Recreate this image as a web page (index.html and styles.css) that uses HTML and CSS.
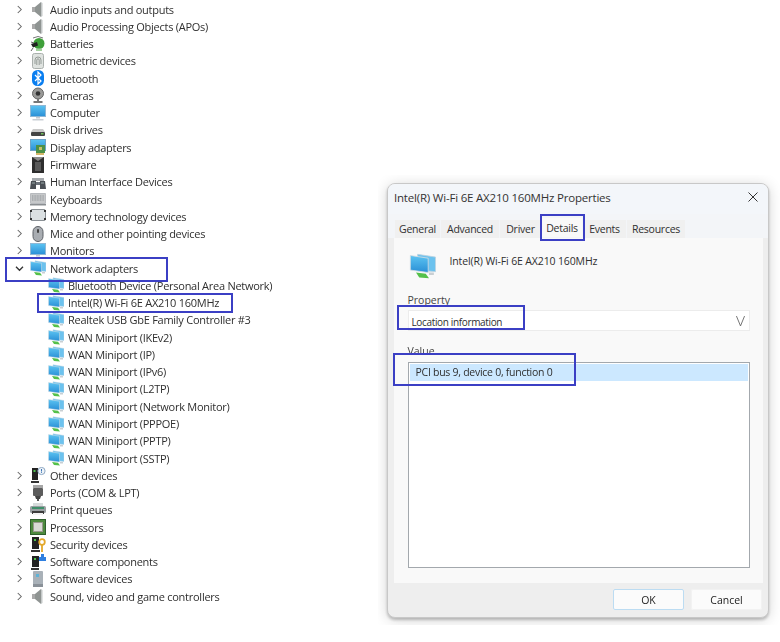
FILE: index.html
```html
<!DOCTYPE html>
<html lang="en">
<head>
<meta charset="utf-8">
<title>Device Manager and adapter properties</title>
<link rel="stylesheet" href="styles.css">
</head>
<body>
<svg class="defs" width="0" height="0" aria-hidden="true">
  <defs>
    <linearGradient id="screen" x1="0" y1="0" x2="0" y2="1"><stop offset="0" stop-color="#5cc4f2"/><stop offset="1" stop-color="#2a8fd6"/></linearGradient>
    <symbol id="chev-r" viewBox="0 0 8 10"><path d="M2 1l4 4-4 4" fill="none" stroke="#666" stroke-width="1.2"/></symbol>
    <symbol id="chev-d" viewBox="0 0 10 8"><path d="M1 2l4 4 4-4" fill="none" stroke="#333" stroke-width="1.5"/></symbol>
    <symbol id="speaker" viewBox="0 0 16 16"><path d="M2 6h3v5H2z" fill="#a9a9a9"/><path d="M5 6l6-5v15l-6-5z" fill="#8f9492"/><path d="M11 1v15l1.5-1V2z" fill="#c4c8c8"/></symbol>
    <symbol id="battery" viewBox="0 0 16 16"><path d="M3 2q5-3 10 0" fill="none" stroke="#777"/><circle cx="9" cy="7.500" r="5.500" fill="#3fa03a"/><path d="M1 8l6-2 1 3.500-5 2z" fill="#222"/><path d="M3 12l-2 3M1 6l3 1" stroke="#666" fill="none"/><path d="M6 12.500h6v2.500H6z" fill="#a5d0a0"/></symbol>
    <symbol id="finger" viewBox="0 0 16 16"><rect x="2.500" y="0.500" width="11" height="15" rx="2" fill="#dfe3e0" stroke="#aab0ad"/><path d="M5 11V7a3 3 0 0 1 6 0v4M6.800 12V7a1.200 1.200 0 0 1 2.400 0v5" fill="none" stroke="#8d9490" stroke-width=".9"/></symbol>
    <symbol id="bt" viewBox="0 0 16 16"><rect x="2" y="0" width="12" height="16" rx="5.500" fill="#0a7ef0"/><path d="M5 5l6 6-3 3V2l3 3-6 6" fill="none" stroke="#fff" stroke-width="1.200"/></symbol>
    <symbol id="cam" viewBox="0 0 16 16"><circle cx="8" cy="6.500" r="5.500" fill="#9a9a98" stroke="#666"/><circle cx="8" cy="6.500" r="2.300" fill="#333"/><path d="M8 12v2" stroke="#777" stroke-width="2"/><path d="M3.500 15h9" stroke="#555" stroke-width="1.600"/></symbol>
    <symbol id="monitor" viewBox="0 0 16 16"><rect x="0.500" y="0.500" width="15" height="11" fill="url(#screen)" stroke="#8fb8d6"/><path d="M6 12h4v1.500H6z" fill="#c5cad0"/><path d="M2.500 14h11v1.500h-11z" fill="#c9ced4"/></symbol>
    <symbol id="disk" viewBox="0 0 16 16"><path d="M3 7h10l2 3H1z" fill="#c9c9c9"/><rect x="1" y="10" width="14" height="4" rx="1" fill="#444"/><rect x="11" y="11" width="2.500" height="1.500" fill="#6fbf5a"/></symbol>
    <symbol id="display" viewBox="0 0 16 16"><rect x="0.500" y="0.500" width="15" height="11" fill="url(#screen)" stroke="#6fa3c6"/><rect x="6" y="6" width="9" height="8" fill="#4c9148"/><rect x="9" y="8" width="3" height="3" fill="#c8c06a"/><path d="M6 15h8" stroke="#c9a03a" stroke-width="1.500"/></symbol>
    <symbol id="firmware" viewBox="0 0 16 16"><path d="M2 0h12v16H2z" fill="#2e2e2e"/><path d="M2 0l6 4 6-4" fill="#8a8a8a"/><path d="M5 5h6v9H5z" fill="#5a5a5a"/></symbol>
    <symbol id="hid" viewBox="0 0 16 16"><path d="M2 4h12v3H2z" fill="#a8acb0"/><path d="M0 15l1-8h5v8zM10 15V7h5l1 8z" fill="#4a4f55"/><path d="M6 8h4v3H6z" fill="#6d747c"/><path d="M2 9h3M11 9h3" stroke="#9aa"/></symbol>
    <symbol id="keyboard" viewBox="0 0 16 16"><rect x="0" y="2.500" width="16" height="10" rx="1" fill="#c6c8ca" stroke="#9ba0a4" stroke-width=".6"/><path d="M2 5h12M2 7h12M2 9h12" stroke="#8f9498" stroke-dasharray="1 .6"/><path d="M0 13h16v1.500H0z" fill="#8a8e92"/></symbol>
    <symbol id="memory" viewBox="0 0 16 16"><rect x="0.500" y="1.500" width="15" height="11" rx="1.500" fill="#dbe0e2" stroke="#8a9095"/><path d="M0 2h2v2H0zM14 2h2v2h-2zM0 10h2v2H0zM14 10h2v2h-2z" fill="#333"/></symbol>
    <symbol id="mouse" viewBox="0 0 16 16"><rect x="3" y="0.500" width="10" height="15" rx="5" fill="#a9adb2" stroke="#5d6167"/><rect x="7" y="3" width="2" height="4" rx="1" fill="#444"/></symbol>
    <symbol id="net" viewBox="0 0 16 16"><path d="M5 .8l11 1.700v9L5 10.500z" fill="#6cc2ee" stroke="#bcd3e0" stroke-width=".5"/><path d="M.5 1.500l11 1.700v8.800L.5 10.500z" fill="url(#screen)" stroke="#d5dde2" stroke-width=".5"/><path d="M4 12l6 .8 2 2.700-6-.5z" fill="#55c04a"/><path d="M12 12h3v1.500h-3z" fill="#c9cfd3"/></symbol>
    <symbol id="other" viewBox="0 0 16 16"><path d="M2 1h6v12H2z" fill="#222"/><rect x="3.500" y="3" width="2" height="2" fill="#4cc04a"/><path d="M1 14h8v2H1z" fill="#333"/><circle cx="11.500" cy="4" r="3.600" fill="#eef3f8" stroke="#8fa9c4"/><path d="M11.500 2v2.500M11.500 5.200v.8" stroke="#3b74b5"/></symbol>
    <symbol id="ports" viewBox="0 0 16 16"><rect x="3" y="0" width="10" height="3" fill="#a7a7a7"/><rect x="3" y="3" width="10" height="8" rx="1" fill="#5c5c5c"/><path d="M5 11h6l-1 3H6z" fill="#444"/><path d="M8 14v2" stroke="#555" stroke-width="2"/></symbol>
    <symbol id="print" viewBox="0 0 16 16"><path d="M3 1h10v4H3z" fill="#d7dcdc"/><rect x="0" y="4" width="16" height="7" rx="1.500" fill="#9aa0a2"/><path d="M2 5h12v2H2z" fill="#3f8f6a"/><path d="M2 9h12v3H2z" fill="#3d3d3d"/><path d="M3 11h10v2H3z" fill="#f3f3f3"/></symbol>
    <symbol id="cpu" viewBox="0 0 16 16"><rect x="0.500" y="0.500" width="15" height="15" fill="#4e8a3f" stroke="#2f5f2c"/><rect x="3.500" y="3.500" width="9" height="9" fill="#d9dad6" stroke="#9a9a8f"/></symbol>
    <symbol id="security" viewBox="0 0 16 16"><path d="M2 1h7v12H2z" fill="#222"/><rect x="4" y="3" width="2" height="2" fill="#4cc04a"/><path d="M1 14h9v2H1z" fill="#333"/><circle cx="12" cy="6" r="2.800" fill="none" stroke="#e3a82a" stroke-width="1.800"/><path d="M12 8.500V16" stroke="#e3a82a" stroke-width="1.800"/></symbol>
    <symbol id="swcomp" viewBox="0 0 16 16"><path d="M2 2h7v11H2z" fill="#222"/><rect x="4" y="4" width="2" height="2" fill="#4cc04a"/><path d="M1 14h8v2H1z" fill="#333"/><path d="M9 3h2V0h3v3h2v4H9z" fill="#2f7fe0"/></symbol>
    <symbol id="swdev" viewBox="0 0 16 16"><rect x="3" y="0" width="10" height="16" rx="1" fill="#a9b1b8"/><rect x="6" y="3" width="3" height="3" fill="#5fb3d6"/><path d="M3 13h10v3H3z" fill="#8a9198"/></symbol>
  </defs>
</svg>
<main class="page">
  <ul class="tree">
    <li class="row"><svg class="chev"><use href="#chev-r"/></svg><svg class="ico"><use href="#speaker"/></svg><span>Audio inputs and outputs</span></li>
    <li class="row"><svg class="chev"><use href="#chev-r"/></svg><svg class="ico"><use href="#speaker"/></svg><span>Audio Processing Objects (APOs)</span></li>
    <li class="row"><svg class="chev"><use href="#chev-r"/></svg><svg class="ico"><use href="#battery"/></svg><span>Batteries</span></li>
    <li class="row"><svg class="chev"><use href="#chev-r"/></svg><svg class="ico"><use href="#finger"/></svg><span>Biometric devices</span></li>
    <li class="row"><svg class="chev"><use href="#chev-r"/></svg><svg class="ico"><use href="#bt"/></svg><span>Bluetooth</span></li>
    <li class="row"><svg class="chev"><use href="#chev-r"/></svg><svg class="ico"><use href="#cam"/></svg><span>Cameras</span></li>
    <li class="row"><svg class="chev"><use href="#chev-r"/></svg><svg class="ico"><use href="#monitor"/></svg><span>Computer</span></li>
    <li class="row"><svg class="chev"><use href="#chev-r"/></svg><svg class="ico"><use href="#disk"/></svg><span>Disk drives</span></li>
    <li class="row"><svg class="chev"><use href="#chev-r"/></svg><svg class="ico"><use href="#display"/></svg><span>Display adapters</span></li>
    <li class="row"><svg class="chev"><use href="#chev-r"/></svg><svg class="ico"><use href="#firmware"/></svg><span>Firmware</span></li>
    <li class="row"><svg class="chev"><use href="#chev-r"/></svg><svg class="ico"><use href="#hid"/></svg><span>Human Interface Devices</span></li>
    <li class="row"><svg class="chev"><use href="#chev-r"/></svg><svg class="ico"><use href="#keyboard"/></svg><span>Keyboards</span></li>
    <li class="row"><svg class="chev"><use href="#chev-r"/></svg><svg class="ico"><use href="#memory"/></svg><span>Memory technology devices</span></li>
    <li class="row"><svg class="chev"><use href="#chev-r"/></svg><svg class="ico"><use href="#mouse"/></svg><span>Mice and other pointing devices</span></li>
    <li class="row"><svg class="chev"><use href="#chev-r"/></svg><svg class="ico"><use href="#monitor"/></svg><span>Monitors</span></li>
    <li class="row"><svg class="chev open"><use href="#chev-d"/></svg><svg class="ico"><use href="#net"/></svg><span>Network adapters</span></li>
    <li class="row child"><svg class="ico"><use href="#net"/></svg><span>Bluetooth Device (Personal Area Network)</span></li>
    <li class="row child"><svg class="ico"><use href="#net"/></svg><span>Intel(R) Wi-Fi 6E AX210 160MHz</span></li>
    <li class="row child"><svg class="ico"><use href="#net"/></svg><span>Realtek USB GbE Family Controller #3</span></li>
    <li class="row child"><svg class="ico"><use href="#net"/></svg><span>WAN Miniport (IKEv2)</span></li>
    <li class="row child"><svg class="ico"><use href="#net"/></svg><span>WAN Miniport (IP)</span></li>
    <li class="row child"><svg class="ico"><use href="#net"/></svg><span>WAN Miniport (IPv6)</span></li>
    <li class="row child"><svg class="ico"><use href="#net"/></svg><span>WAN Miniport (L2TP)</span></li>
    <li class="row child"><svg class="ico"><use href="#net"/></svg><span>WAN Miniport (Network Monitor)</span></li>
    <li class="row child"><svg class="ico"><use href="#net"/></svg><span>WAN Miniport (PPPOE)</span></li>
    <li class="row child"><svg class="ico"><use href="#net"/></svg><span>WAN Miniport (PPTP)</span></li>
    <li class="row child"><svg class="ico"><use href="#net"/></svg><span>WAN Miniport (SSTP)</span></li>
    <li class="row"><svg class="chev"><use href="#chev-r"/></svg><svg class="ico"><use href="#other"/></svg><span>Other devices</span></li>
    <li class="row"><svg class="chev"><use href="#chev-r"/></svg><svg class="ico"><use href="#ports"/></svg><span>Ports (COM &amp; LPT)</span></li>
    <li class="row"><svg class="chev"><use href="#chev-r"/></svg><svg class="ico"><use href="#print"/></svg><span>Print queues</span></li>
    <li class="row"><svg class="chev"><use href="#chev-r"/></svg><svg class="ico"><use href="#cpu"/></svg><span>Processors</span></li>
    <li class="row"><svg class="chev"><use href="#chev-r"/></svg><svg class="ico"><use href="#security"/></svg><span>Security devices</span></li>
    <li class="row"><svg class="chev"><use href="#chev-r"/></svg><svg class="ico"><use href="#swcomp"/></svg><span>Software components</span></li>
    <li class="row"><svg class="chev"><use href="#chev-r"/></svg><svg class="ico"><use href="#swdev"/></svg><span>Software devices</span></li>
    <li class="row"><svg class="chev"><use href="#chev-r"/></svg><svg class="ico"><use href="#speaker"/></svg><span>Sound, video and game controllers</span></li>
  </ul>

  <div class="backdrop">
    <section class="dialog">
      <header class="titlebar">
        <h1 class="title">Intel(R) Wi-Fi 6E AX210 160MHz Properties</h1>
        <svg class="close" viewBox="0 0 10 10"><path d="M.5.500l9 9M9.500.500l-9 9" stroke="#333" stroke-width="1" fill="none"/></svg>
      </header>
      <nav class="tabs">
        <span class="tab t-general">General</span>
        <span class="tab t-advanced">Advanced</span>
        <span class="tab t-driver">Driver</span>
        <span class="tab active">Details</span>
        <span class="tab t-events">Events</span>
        <span class="tab t-resources">Resources</span>
      </nav>
      <div class="panel">
        <div class="device">
          <svg class="device-ico"><use href="#net"/></svg>
          <span>Intel(R) Wi-Fi 6E AX210 160MHz</span>
        </div>
        <label class="field-label prop-label">Property</label>
        <div class="combo">
          <span class="combo-text">Location information</span>
          <svg class="combo-arrow" viewBox="0 0 10 12"><path d="M.5.500L5 11.500 9.500.500" fill="none" stroke="#666" stroke-width="1"/></svg>
        </div>
        <label class="field-label value-label">Value</label>
        <div class="list">
          <div class="list-sel">PCI bus 9, device 0, function 0</div>
        </div>
      </div>
      <footer class="footer">
        <button class="btn default">OK</button>
        <button class="btn">Cancel</button>
      </footer>
    </section>
  </div>

  <div class="mark m-network"></div>
  <div class="mark m-intel"></div>
  <div class="mark m-details"></div>
  <div class="mark m-location"></div>
  <div class="mark m-value"></div>
</main>
</body>
</html>
```
FILE: styles.css
```css
* { box-sizing: border-box; }
html, body { margin: 0; padding: 0; background: #fff; }
.defs { position: absolute; }
.page {
  position: relative;
  display: flex;
  align-items: flex-start;
  width: 780px;
  height: 642px;
  overflow: hidden;
  font-family: "Open Sans", "Noto Sans", sans-serif;
  color: #2f2f2f;
  filter: blur(0.4px);
}
.tree {
  list-style: none;
  margin: 0;
  padding: 0.500px 0 0 0;
  width: 378px;
  flex: none;
  font-size: 11px;
  letter-spacing: -0.26px;
}
.row {
  display: flex;
  align-items: center;
  height: 17.28px;
  padding-left: 16px;
  white-space: nowrap;
}
.row.child { padding-left: 48px; }
.chev { width: 7px; height: 9px; margin-right: 7px; flex: none; }
.chev.open { width: 9px; height: 7px; margin-left: -1px; margin-right: 6px; }
.ico { width: 16px; height: 16px; margin-right: 4px; flex: none; }
.backdrop {
  flex: none;
  width: 402px;
  height: 450px;
  margin-top: 175px;
  padding: 8px 11px 7px 9px;
  overflow: hidden;
}
.dialog {
  display: flex;
  flex-direction: column;
  width: 382px;
  height: 435px;
  border-radius: 8px;
  background: #eeeeee;
  border: 1px solid #c8c8c8;
  box-shadow: 0 2px 3px rgba(0,0,0,.22), 0 2px 14px rgba(0,0,0,.17);
  overflow: hidden;
}
.titlebar {
  display: flex;
  align-items: center;
  justify-content: space-between;
  height: 30px;
  padding: 0 10px 4px 6px;
  background: #f3f6fa;
}
.title { margin: 0; font-size: 11.5px; font-weight: 400; color: #333; letter-spacing: -0.2px; }
.close { width: 10px; height: 10px; }
.tabs {
  display: flex;
  height: 24px;
  padding: 6px 0 0 7px;
  background: #f3f5f8;
  font-size: 10.500px;
  letter-spacing: -0.24px;
}
.tab {
  display: flex;
  align-items: center;
  justify-content: center;
  height: 18px;
  background: #f0f0f0;
  margin-right: 1px;
}
.t-general { width: 45px; }
.t-advanced { width: 58px; }
.t-driver { width: 41px; }
.tab.active { width: 40px; background: #f9f9f9; height: 19px; margin-top: -2px; }
.t-events { width: 43px; }
.t-resources { width: 58px; }
.panel {
  display: flex;
  flex-direction: column;
  align-self: center;
  width: 369px;
  height: 345px;
  padding: 16px 13px 0 14px;
  background: #f9f9f9;
  font-size: 10.500px;
}
.device { display: flex; align-items: flex-start; gap: 13px; height: 38px; letter-spacing: -0.13px; }
.device span { margin-top: 0; }
.device-ico { width: 29px; height: 26px; margin-top: -1px; }
.field-label { display: block; height: 13px; line-height: 13px; color: #444; }
.prop-label { margin-top: 2px; }
.combo {
  display: flex;
  align-items: center;
  justify-content: space-between;
  height: 21px;
  margin-top: 3px;
  padding: 0 4px 0 3px;
  background: #fff;
  border: 1px solid #ececec;
}
.combo-text { font-size: 10px; letter-spacing: -0.35px; margin-top: 2px; }
.combo-arrow { width: 9px; height: 12px; }
.value-label { margin-top: 14px; }
.list {
  height: 206px;
  margin-top: 4px;
  padding: 1px;
  background: #fff;
  border: 1px solid #a3a8ad;
}
.list-sel {
  height: 17px;
  line-height: 17px;
  padding-left: 6px;
  background: #cce8ff;
  letter-spacing: -0.27px;
}
.footer {
  display: flex;
  justify-content: flex-end;
  gap: 7px;
  padding: 6px 6px 0 0;
}
.btn {
  width: 71px;
  height: 21px;
  padding: 0;
  font: inherit;
  font-size: 10.500px;
  color: #222;
  background: #fbfbfb;
  border: 1px solid #f2f2f2;
  border-radius: 2px;
}
.btn.default { border: 1px solid #bcdcf2; }
.mark {
  position: absolute;
  border: 2px solid #3b3fc4;
}
.m-network { left: 5px; top: 257px; width: 163px; height: 25px; }
.m-intel { left: 37px; top: 293px; width: 196px; height: 20px; }
.m-details { left: 540px; top: 214px; width: 45px; height: 27px; }
.m-location { left: 397px; top: 305px; width: 128px; height: 25px; }
.m-value { left: 393px; top: 353px; width: 183px; height: 33px; }
```
